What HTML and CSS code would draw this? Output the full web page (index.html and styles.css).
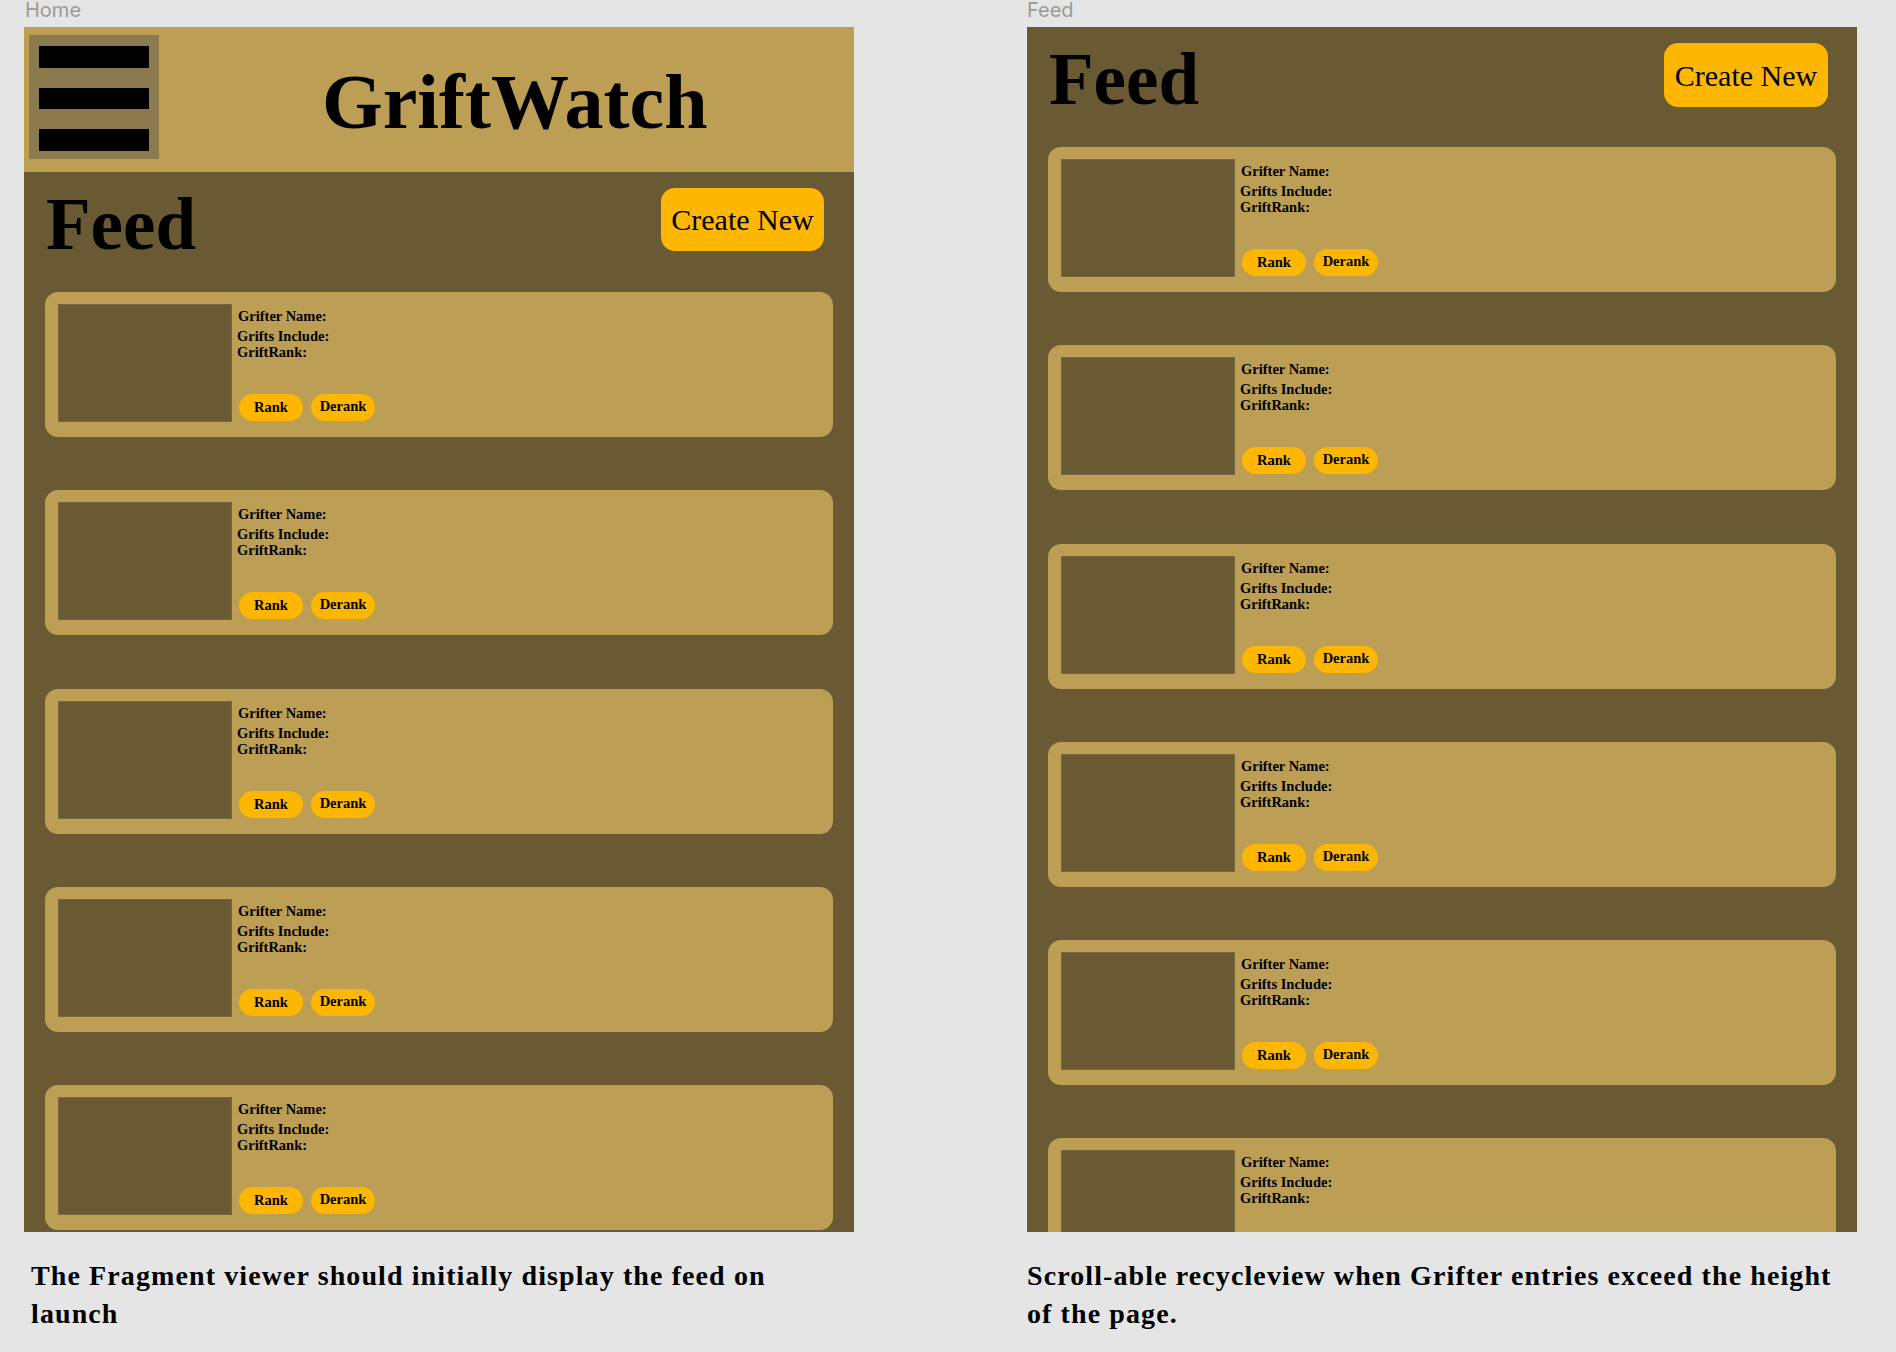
FILE: index.html
```html
<!DOCTYPE html>
<html>
<head>
<meta charset="utf-8">
<link rel="stylesheet" href="styles.css">
</head>
<body>
<div class="board">
  <section class="col col-home">
    <div class="frame-label">Home</div>
    <div class="frame">
      <header class="app-bar">
        <div class="menu-box">
          <span class="bar"></span><span class="bar"></span><span class="bar"></span>
        </div>
        <h1 class="app-title">GriftWatch</h1>
      </header>
      <div class="feed">
        <div class="feed-head">
          <h2 class="feed-title">Feed</h2>
          <button class="create-btn">Create New</button>
        </div>
        <div class="cards">
          <div class="card"><div class="thumb"></div><div class="info"><div class="l1">Grifter Name:</div><div class="l2">Grifts Include:</div><div class="l3">GriftRank:</div><div class="actions"><span class="pill">Rank</span><span class="pill pill-d">Derank</span></div></div></div>
          <div class="card"><div class="thumb"></div><div class="info"><div class="l1">Grifter Name:</div><div class="l2">Grifts Include:</div><div class="l3">GriftRank:</div><div class="actions"><span class="pill">Rank</span><span class="pill pill-d">Derank</span></div></div></div>
          <div class="card"><div class="thumb"></div><div class="info"><div class="l1">Grifter Name:</div><div class="l2">Grifts Include:</div><div class="l3">GriftRank:</div><div class="actions"><span class="pill">Rank</span><span class="pill pill-d">Derank</span></div></div></div>
          <div class="card"><div class="thumb"></div><div class="info"><div class="l1">Grifter Name:</div><div class="l2">Grifts Include:</div><div class="l3">GriftRank:</div><div class="actions"><span class="pill">Rank</span><span class="pill pill-d">Derank</span></div></div></div>
          <div class="card"><div class="thumb"></div><div class="info"><div class="l1">Grifter Name:</div><div class="l2">Grifts Include:</div><div class="l3">GriftRank:</div><div class="actions"><span class="pill">Rank</span><span class="pill pill-d">Derank</span></div></div></div>
        </div>
      </div>
    </div>
    <p class="caption caption-home">The Fragment viewer should initially display the feed on launch</p>
  </section>

  <section class="col col-feed">
    <div class="frame-label">Feed</div>
    <div class="frame">
      <div class="feed">
        <div class="feed-head">
          <h2 class="feed-title">Feed</h2>
          <button class="create-btn">Create New</button>
        </div>
        <div class="cards">
          <div class="card"><div class="thumb"></div><div class="info"><div class="l1">Grifter Name:</div><div class="l2">Grifts Include:</div><div class="l3">GriftRank:</div><div class="actions"><span class="pill">Rank</span><span class="pill pill-d">Derank</span></div></div></div>
          <div class="card"><div class="thumb"></div><div class="info"><div class="l1">Grifter Name:</div><div class="l2">Grifts Include:</div><div class="l3">GriftRank:</div><div class="actions"><span class="pill">Rank</span><span class="pill pill-d">Derank</span></div></div></div>
          <div class="card"><div class="thumb"></div><div class="info"><div class="l1">Grifter Name:</div><div class="l2">Grifts Include:</div><div class="l3">GriftRank:</div><div class="actions"><span class="pill">Rank</span><span class="pill pill-d">Derank</span></div></div></div>
          <div class="card"><div class="thumb"></div><div class="info"><div class="l1">Grifter Name:</div><div class="l2">Grifts Include:</div><div class="l3">GriftRank:</div><div class="actions"><span class="pill">Rank</span><span class="pill pill-d">Derank</span></div></div></div>
          <div class="card"><div class="thumb"></div><div class="info"><div class="l1">Grifter Name:</div><div class="l2">Grifts Include:</div><div class="l3">GriftRank:</div><div class="actions"><span class="pill">Rank</span><span class="pill pill-d">Derank</span></div></div></div>
          <div class="card"><div class="thumb"></div><div class="info"><div class="l1">Grifter Name:</div><div class="l2">Grifts Include:</div><div class="l3">GriftRank:</div></div></div>
        </div>
      </div>
    </div>
    <p class="caption caption-feed">Scroll-able recycleview when Grifter entries exceed the height of the page.</p>
  </section>
</div>
</body>
</html>
```

FILE: styles.css
```css
html, body {
  margin: 0;
  padding: 0;
  background: #e5e5e5;
  width: 1896px;
  height: 1352px;
  overflow: hidden;
}

.board {
  display: flex;
  gap: 173px;
  padding-left: 24px;
}

.col {
  width: 830px;
  display: flex;
  flex-direction: column;
}

.frame-label {
  font-family: Inter, "Noto Sans", sans-serif;
  font-size: 20px;
  line-height: 20px;
  height: 20px;
  color: #9a9a9a;
  margin-bottom: 7px;
}

.col-home .frame-label {
  padding-left: 1px;
}

.frame {
  width: 830px;
  height: 1205px;
  background: #695a34;
  overflow: hidden;
  display: flex;
  flex-direction: column;
}

.app-bar {
  height: 145px;
  flex: none;
  box-sizing: border-box;
  background: #bc9e55;
  display: flex;
  align-items: flex-start;
  padding: 8px 0 0 5px;
}

.menu-box {
  width: 130px;
  height: 124px;
  background: #8a7a4d;
  box-sizing: border-box;
  padding: 11px 10px 0 10px;
  display: flex;
  flex-direction: column;
  gap: 20px;
}

.bar {
  display: block;
  height: 21.5px;
  background: #000;
}

.app-title {
  margin: 27.7px 0 0 163px;
  font-family: "Liberation Serif", "Times New Roman", serif;
  font-weight: 700;
  font-size: 78px;
  line-height: 1;
  color: #000;
}

.feed {
  display: flex;
  flex-direction: column;
}

.feed-head {
  height: 120px;
  flex: none;
  box-sizing: border-box;
  display: flex;
  justify-content: space-between;
  align-items: flex-start;
  padding: 0 30px 0 22px;
}

.feed-title {
  margin: 15.9px 0 0 0;
  font-family: "Liberation Serif", "Times New Roman", serif;
  font-weight: 700;
  font-size: 73px;
  line-height: 1;
  color: #000;
}

.create-btn {
  margin-top: 16px;
  width: 163px;
  height: 63px;
  border: none;
  border-radius: 14px;
  background: #fdb702;
  color: #000;
  font-family: "Liberation Serif", "Times New Roman", serif;
  font-weight: 400;
  font-size: 30px;
  padding: 0;
  line-height: 63px;
}

.col-feed .create-btn {
  width: 164px;
  height: 64px;
  margin-right: -1px;
}

.cards {
  display: flex;
  flex-direction: column;
  gap: 53.25px;
  padding: 0 21px;
}

.card {
  flex: none;
  height: 145px;
  box-sizing: border-box;
  background: #bc9e55;
  border-radius: 13px;
  padding: 12px 13px;
  display: flex;
  align-items: flex-start;
}

.thumb {
  width: 174px;
  height: 118px;
  box-sizing: border-box;
  background: #695a34;
  border: 1px solid #776840;
  flex: none;
}

.info {
  padding: 4px 0 0 6px;
  font-family: "Liberation Serif", "Times New Roman", serif;
  font-weight: 700;
  font-size: 14.5px;
  line-height: 16px;
  color: #000;
}

.l2 {
  margin-top: 4px;
  margin-left: -1px;
}

.l3 {
  margin-left: -1px;
}

.actions {
  margin-top: 34px;
  margin-left: 1px;
  display: flex;
  gap: 8px;
}

.pill {
  display: block;
  width: 64px;
  height: 27px;
  line-height: 27px;
  border-radius: 14px;
  background: #fdb702;
  text-align: center;
  font-size: 14.5px;
}

.pill-d {
  line-height: 25px;
}

.caption {
  margin: 24.6px 0 0 0;
  max-width: 812px;
  font-family: "Liberation Serif", "Times New Roman", serif;
  font-weight: 700;
  font-size: 28px;
  line-height: 38px;
  letter-spacing: 1.1px;
  color: #000;
}

.caption-home {
  padding-left: 7px;
}
```
